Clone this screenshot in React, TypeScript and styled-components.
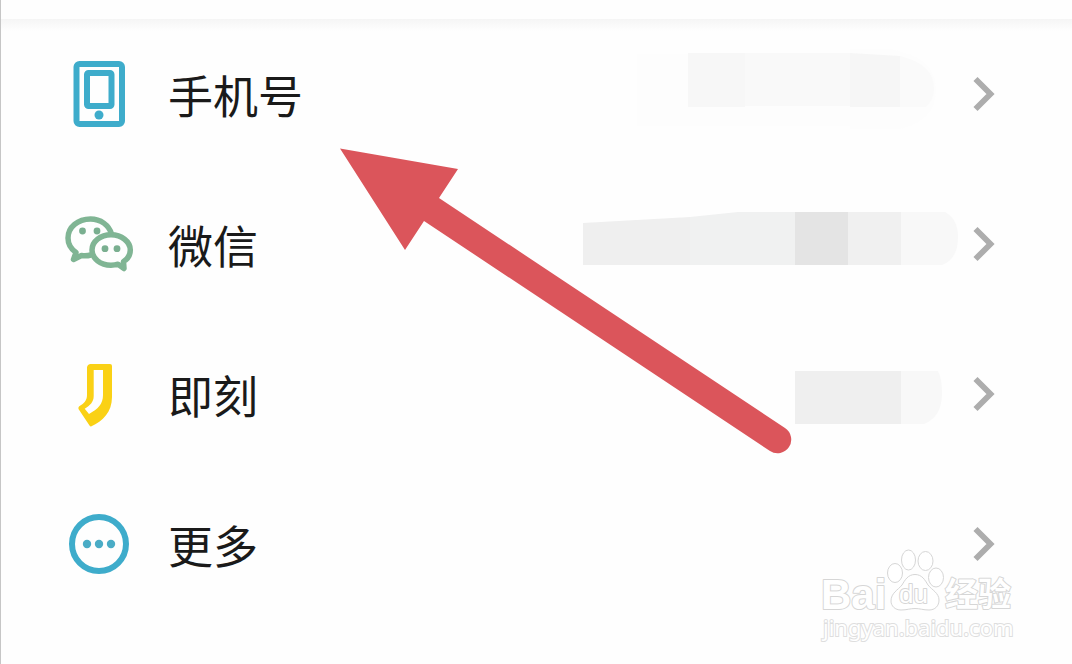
import React from "react";
import styled, { createGlobalStyle } from "styled-components";

const GlobalStyle = createGlobalStyle`
  * { box-sizing: border-box; }
  body {
    margin: 0;
    background: #fefefe;
    font-family: "Noto Sans CJK SC", "Noto Sans", sans-serif;
    color: #1a1a1a;
  }
`;

const Page = styled.main`
  position: relative;
  min-height: 100vh;
  padding-bottom: 45px;
  border-left: 1px solid #c6c6c6;
  overflow: hidden;
`;

const Divider = styled.div`
  height: 12px;
  margin-bottom: -12px;
  background: linear-gradient(#f5f5f5, #fefefe);
`;

const TopBar = styled.header`
  height: 19px;
`;

const List = styled.ul`
  margin: 0;
  padding: 0;
  list-style: none;
`;

const Row = styled.button`
  display: flex;
  align-items: center;
  width: 100%;
  height: 150px;
  padding: 0 76px 0 63px;
  border: 0;
  background: transparent;
  color: inherit;
  font: inherit;
  text-align: left;
  cursor: pointer;
`;

const Icon = styled.svg`
  flex: none;
  width: 70px;
  height: 70px;
  margin-right: 34px;
`;

const Label = styled.span`
  flex: 1;
  padding-top: 2px;
  font-size: 45px;
  line-height: 64px;
  white-space: nowrap;
`;

const Redaction = styled.svg`
  flex: none;
  width: 400px;
  height: 90px;
  margin-right: 12px;
`;

const Chevron = styled.svg`
  flex: none;
  width: 24px;
  height: 40px;
`;

const Arrow = styled.svg`
  position: absolute;
  top: 148px;
  left: 339px;
  width: 454px;
  height: 308px;
  pointer-events: none;
`;

const Watermark = styled.aside`
  position: absolute;
  right: 52px;
  top: 546px;
  display: flex;
  flex-direction: column;
  width: 200px;
`;

const Logo = styled.svg`
  width: 200px;
  height: 68px;
  overflow: visible;
`;

const LogoText = styled.text`
  stroke-width: 2px;
  stroke-linejoin: round;
  paint-order: stroke;
`;

const SiteLink = styled.a`
  padding-left: 3px;
  color: #ffffff;
  font: 22px/26px "Noto Sans", sans-serif;
  text-decoration: none;
  -webkit-text-stroke: 2px #dedede;
  paint-order: stroke;
`;

const PhoneIcon = () => (
  <Icon viewBox="0 0 70 70" fill="none" stroke="#3eaccb" strokeWidth="6" aria-hidden="true">
    <rect x="12.5" y="5" width="45.5" height="60" rx="3" />
    <rect x="23" y="14" width="24.5" height="33" rx="1.5" />
    <circle cx="35" cy="56" r="4.5" fill="#3eaccb" stroke="none" />
  </Icon>
);

const WechatIcon = () => (
  <Icon viewBox="0 0 70 70" fill="none" stroke="#80b594" strokeWidth="5.5" strokeLinejoin="round" aria-hidden="true">
    <path d="M47.5 25C45 16 36.5 10 26.5 10C14 10 4 18 4 29C4 35 7 40 12 43.500L9.500 50.500L17.500 46.500C20.500 47 23 47 27 46" />
    <path d="M47 25.800C36.500 25.800 28 32.500 28 41C28 49.500 36.500 56.200 47 56.200C49.500 56.200 52 55.800 54 55.200L60 59.500L59.500 52.500C64 49.800 66.300 45.500 66.300 41C66.300 32.500 57.500 25.800 47 25.800Z" />
    <g fill="#7aaf90" stroke="none">
      <circle cx="18.500" cy="22" r="3.400" />
      <circle cx="33" cy="22" r="3.400" />
      <circle cx="41" cy="39.700" r="3.400" />
      <circle cx="53" cy="39.700" r="3.400" />
    </g>
  </Icon>
);

const JikeIcon = () => (
  <Icon viewBox="0 0 70 70" aria-hidden="true">
    <path
      fill="#fad115"
      fillRule="evenodd"
      d="M26 5H46Q48 5 48 7V38C48 53 39 62 27 67.500Q26 67.500 25.500 66.500L14.500 50Q14 48.500 15 47.500C20 44.500 23 41.500 23 36V8Q23.500 5.500 26 5ZM29.700 11V37C29.700 43 26 46.500 20.700 49.700L25 55C34 50 39 45 39 36V11Z"
    />
  </Icon>
);

const MoreIcon = () => (
  <Icon viewBox="0 0 70 70" aria-hidden="true">
    <circle cx="35" cy="35" r="27" fill="none" stroke="#3eaccb" strokeWidth="6" />
    <g fill="#4aacc6">
      <circle cx="23" cy="35" r="4.200" />
      <circle cx="35" cy="35" r="4.200" />
      <circle cx="47" cy="35" r="4.200" />
    </g>
  </Icon>
);

const PhoneRedaction = () => (
  <Redaction viewBox="0 0 400 90" aria-hidden="true">
    <path fill="#fdfdfd" d="M77 5H290V0H330Q376 8 376 40Q376 72 340 80H290V77H77Z" />
    <rect x="128" y="4" width="57" height="54" fill="#f7f7f7" />
    <rect x="185" y="4" width="105" height="53" fill="#f9f9f9" />
    <path fill="#f6f6f6" d="M290 4L340 7V58H290Z" />
    <path fill="#fafafa" d="M340 7Q374 15 374 40Q374 50 366 58H340Z" />
  </Redaction>
);

const WechatRedaction = () => (
  <Redaction viewBox="0 0 400 90" aria-hidden="true">
    <path fill="#efefef" d="M23 24L130 18V66H23Z" />
    <path fill="#f0f1f1" d="M130 18L178 13H235V66H130Z" />
    <rect x="235" y="13" width="53" height="53" fill="#e4e4e4" />
    <rect x="288" y="13" width="53" height="53" fill="#f0f0f0" />
    <path fill="#f8f8f8" d="M341 13H385Q398 20 398 38Q398 60 382 66H341Z" />
  </Redaction>
);

const JikeRedaction = () => (
  <Redaction viewBox="0 0 400 90" aria-hidden="true">
    <rect x="235" y="22" width="106" height="53" fill="#efefef" />
    <path fill="#f8f8f8" d="M341 22H378Q382 30 382 44Q382 68 364 75H341Z" />
  </Redaction>
);

const rows = [
  { label: "手机号", Glyph: PhoneIcon, Value: PhoneRedaction },
  { label: "微信", Glyph: WechatIcon, Value: WechatRedaction },
  { label: "即刻", Glyph: JikeIcon, Value: JikeRedaction },
  { label: "更多", Glyph: MoreIcon, Value: null },
];

export default function App() {
  return (
    <>
      <GlobalStyle />
      <Page>
        <TopBar />
        <Divider />
        <List>
          {rows.map(({ label, Glyph, Value }) => (
            <li key={label}>
              <Row type="button">
                <Glyph />
                <Label>{label}</Label>
                {Value && <Value />}
                <Chevron viewBox="0 0 24 40" fill="none" stroke="#adadad" strokeWidth="5.8" aria-hidden="true">
                  <path d="M3.500 5L18.500 20L3.500 35" />
                </Chevron>
              </Row>
            </li>
          ))}
        </List>
        <Arrow viewBox="0 0 454 308" fill="#db555b" aria-hidden="true">
          <path d="M0 0.500L118 21L99 50L445 280A13.500 13.500 0 0 1 430 303L84 73L65 102Z" />
        </Arrow>
        <Watermark>
          <Logo viewBox="0 0 200 68" fill="#ffffff" stroke="#d6d6d6" strokeWidth="1">
            <LogoText x="1" y="63" fontFamily="Liberation Sans, sans-serif" fontWeight="700" fontSize="42">Bai</LogoText>
            <ellipse cx="75" cy="27" rx="7.500" ry="9.500" />
            <ellipse cx="88.500" cy="14" rx="7" ry="10" />
            <ellipse cx="105.500" cy="15" rx="7.500" ry="9.500" />
            <ellipse cx="116" cy="31.500" rx="7.500" ry="9.500" />
            <path d="M95 28.500C88 28.500 85 34 82 39C78 44 71 47 71 55C71 60 75 64 81 64C87 64 90 62.500 95 62.500C100 62.500 103 64 109 64C115 64 119 60 119 54C119 47 112 44 108 39C105 34 102 28.500 95 28.500Z" />
            <LogoText x="79" y="57" fontFamily="Liberation Sans, sans-serif" fontSize="26">du</LogoText>
            <LogoText x="125" y="60" fontFamily="Noto Sans CJK SC, sans-serif" fontWeight="700" fontSize="33">经验</LogoText>
          </Logo>
          <SiteLink href="#">jingyan.baidu.com</SiteLink>
        </Watermark>
      </Page>
    </>
  );
}
